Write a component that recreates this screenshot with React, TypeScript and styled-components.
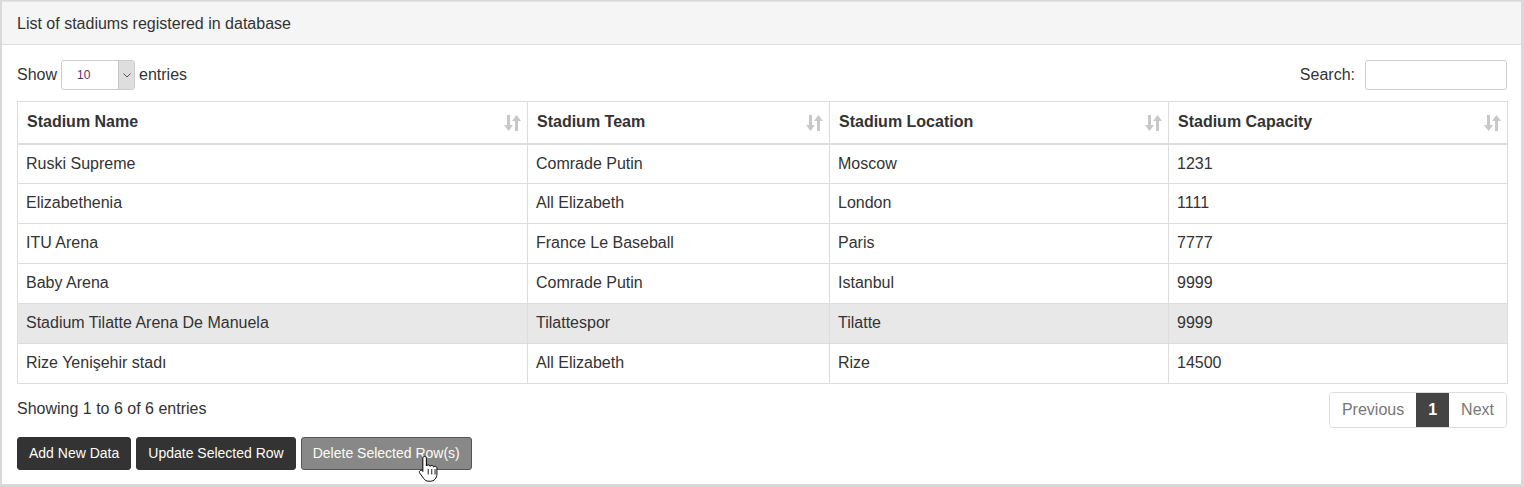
import * as React from "react";
import styled, { createGlobalStyle } from "styled-components";

const GlobalStyle = createGlobalStyle`
    html, body {
        margin: 0;
        padding: 0;
        background: #ffffff;
    }
    body {
        font-family: "Liberation Sans", Arial, Helvetica, sans-serif;
        font-size: 16px;
        line-height: 1.42857;
        color: #333333;
    }
`;

const Panel = styled.div`
    box-sizing: border-box;
    width: 1524px;
    height: 487px;
    border-style: solid;
    border-color: #d9d9d9;
    border-width: 1px 3px 3px 2px;
    background: #ffffff;
    position: relative;
`;

const PanelHeading = styled.div`
    background: #f5f5f5;
    border-top: 1px solid #e2e2e2;
    border-bottom: 1px solid #dddddd;
    padding: 11px 15px 9px 15px;
    height: 22px;
    line-height: 22px;
    font-size: 16px;
    color: #333;
`;

const PanelBody = styled.div`
    padding: 15px 14px 0 15px;
`;

const TopBar = styled.div`
    display: flex;
    justify-content: space-between;
    align-items: center;
    height: 30px;
`;

const Label = styled.label`
    display: flex;
    align-items: center;
    gap: 4px;
    font-size: 16px;
    color: #333;
`;

const FakeSelect = styled.div`
    box-sizing: border-box;
    width: 74px;
    height: 30px;
    border: 1px solid #cccccc;
    border-radius: 3px;
    display: flex;
    align-items: stretch;
    background: #fff;
    overflow: hidden;
`;

const SelectValue = styled.span`
    flex: 1;
    font-size: 12px;
    line-height: 28px;
    padding-left: 15px;
    color: #5b2c6f;
`;

const SelectArrow = styled.span`
    width: 15px;
    background: #dedede;
    border-left: 1px solid #c4c4c4;
    display: flex;
    align-items: center;
    justify-content: center;
`;

const SearchInput = styled.input`
    box-sizing: border-box;
    width: 142px;
    height: 30px;
    border: 1px solid #cccccc;
    border-radius: 3px;
    margin-left: 6px;
    outline: none;
`;

const Table = styled.table`
    margin-top: 11px;
    width: 1490px;
    border-collapse: collapse;
    table-layout: fixed;
    font-size: 16px;
`;

const Th = styled.th<{ $w: number }>`
    width: ${(p) => p.$w}px;
    box-sizing: border-box;
    text-align: left;
    font-weight: bold;
    color: #333;
    padding: 8px 30px 8px 9px;
    height: 42px;
    border: 1px solid #dddddd;
    border-bottom: 2px solid #dddddd;
    position: relative;
`;

const SortIcon = styled.span`
    position: absolute;
    right: 6px;
    top: 12px;
    display: flex;
`;

const Tr = styled.tr<{ $hover?: boolean }>`
    background: ${(p) => (p.$hover ? "#e8e8e8" : "#ffffff")};
`;

const Td = styled.td`
    padding: 8px;
    height: 39px;
    box-sizing: border-box;
    border: 1px solid #dddddd;
    color: #333;
`;

const FooterRow = styled.div`
    display: flex;
    justify-content: space-between;
    align-items: center;
    margin-top: 8px;
`;

const Info = styled.div`
    font-size: 16px;
    color: #333;
`;

const Pagination = styled.div`
    display: flex;
    border: 1px solid #dddddd;
    border-radius: 4px;
    overflow: hidden;
    height: 34px;
`;

const PageItem = styled.span<{ $active?: boolean }>`
    padding: 0 12px;
    line-height: 34px;
    font-size: 16px;
    color: ${(p) => (p.$active ? "#ffffff" : "#777777")};
    background: ${(p) => (p.$active ? "#444444" : "#ffffff")};
    font-weight: ${(p) => (p.$active ? "bold" : "normal")};
`;

const Actions = styled.div`
    display: flex;
    gap: 5px;
    margin-top: 9px;
    position: relative;
`;

const Button = styled.button<{ $muted?: boolean }>`
    box-sizing: border-box;
    height: 33px;
    padding: 0 11px;
    font-family: "Liberation Sans", Arial, sans-serif;
    font-size: 14px;
    color: #fdfdf5;
    background: ${(p) => (p.$muted ? "#888888" : "#333333")};
    border: 1px solid ${(p) => (p.$muted ? "#555555" : "#333333")};
    border-radius: 3px;
    cursor: pointer;
`;

const Cursor = styled.span`
    position: absolute;
    left: 401px;
    top: 17px;
    pointer-events: none;
`;

const SortGlyph = () => (
    <svg width="17" height="18" viewBox="0 0 17 18">
        <g fill="#c8c8c8">
            <rect x="3" y="1" width="3" height="11" />
            <polygon points="0,11 9,11 4.5,17" />
            <rect x="11" y="6" width="3" height="11" />
            <polygon points="8,7 17,7 12.5,1" />
        </g>
    </svg>
);

const HandCursor = () => (
    <svg width="22" height="30" viewBox="0 0 20 26">
        <path
            d="M6 1.5c1 0 1.6.7 1.6 1.6v7.2c.3-.6 1-1 1.7-1 .9 0 1.5.6 1.6 1.3.3-.5.9-.8 1.6-.8.9 0 1.5.6 1.6 1.4.3-.4.8-.7 1.4-.7 1 0 1.7.8 1.7 1.8v5.4c0 3.4-2.4 6.4-6 6.4h-1.6c-2 0-3.3-.9-4.4-2.4L1.6 16.8c-.6-.8-.4-1.8.3-2.3.7-.5 1.6-.4 2.200.3l.3.4V3.1C4.4 2.2 5 1.5 6 1.5z"
            fill="#ffffff"
            stroke="#000000"
            strokeWidth="0.9"
        />
        <path d="M9.3 13v5M12.5 13v5M15.5 13v5" stroke="#000" strokeWidth="0.8" />
    </svg>
);

type Stadium = { name: string; team: string; location: string; capacity: string };

const rows: Stadium[] = [
    { name: "Ruski Supreme", team: "Comrade Putin", location: "Moscow", capacity: "1231" },
    { name: "Elizabethenia", team: "All Elizabeth", location: "London", capacity: "1111" },
    { name: "ITU Arena", team: "France Le Baseball", location: "Paris", capacity: "7777" },
    { name: "Baby Arena", team: "Comrade Putin", location: "Istanbul", capacity: "9999" },
    { name: "Stadium Tilatte Arena De Manuela", team: "Tilattespor", location: "Tilatte", capacity: "9999" },
    { name: "Rize Yenişehir stadı", team: "All Elizabeth", location: "Rize", capacity: "14500" },
];

const columns = [
    { title: "Stadium Name", width: 510 },
    { title: "Stadium Team", width: 302 },
    { title: "Stadium Location", width: 339 },
    { title: "Stadium Capacity", width: 339 },
];

export default function App() {
    return (
        <>
            <GlobalStyle />
            <Panel>
                <PanelHeading>List of stadiums registered in database</PanelHeading>
                <PanelBody>
                    <TopBar>
                        <Label>
                            Show
                            <FakeSelect>
                                <SelectValue>10</SelectValue>
                                <SelectArrow>
                                    <svg width="8" height="5" viewBox="0 0 8 5">
                                        <path d="M0.5 0.5L4 4L7.5 0.5" fill="none" stroke="#555" strokeWidth="1" />
                                    </svg>
                                </SelectArrow>
                            </FakeSelect>
                            entries
                        </Label>
                        <Label>
                            Search:
                            <SearchInput type="search" />
                        </Label>
                    </TopBar>
                    <Table>
                        <thead>
                            <tr>
                                {columns.map((c) => (
                                    <Th key={c.title} $w={c.width}>
                                        {c.title}
                                        <SortIcon>
                                            <SortGlyph />
                                        </SortIcon>
                                    </Th>
                                ))}
                            </tr>
                        </thead>
                        <tbody>
                            {rows.map((r, i) => (
                                <Tr key={i} $hover={i === 4}>
                                    <Td>{r.name}</Td>
                                    <Td>{r.team}</Td>
                                    <Td>{r.location}</Td>
                                    <Td>{r.capacity}</Td>
                                </Tr>
                            ))}
                        </tbody>
                    </Table>
                    <FooterRow>
                        <Info>Showing 1 to 6 of 6 entries</Info>
                        <Pagination>
                            <PageItem>Previous</PageItem>
                            <PageItem $active>1</PageItem>
                            <PageItem>Next</PageItem>
                        </Pagination>
                    </FooterRow>
                    <Actions>
                        <Button>Add New Data</Button>
                        <Button>Update Selected Row</Button>
                        <Button $muted>Delete Selected Row(s)</Button>
                        <Cursor>
                            <HandCursor />
                        </Cursor>
                    </Actions>
                </PanelBody>
            </Panel>
        </>
    );
}
